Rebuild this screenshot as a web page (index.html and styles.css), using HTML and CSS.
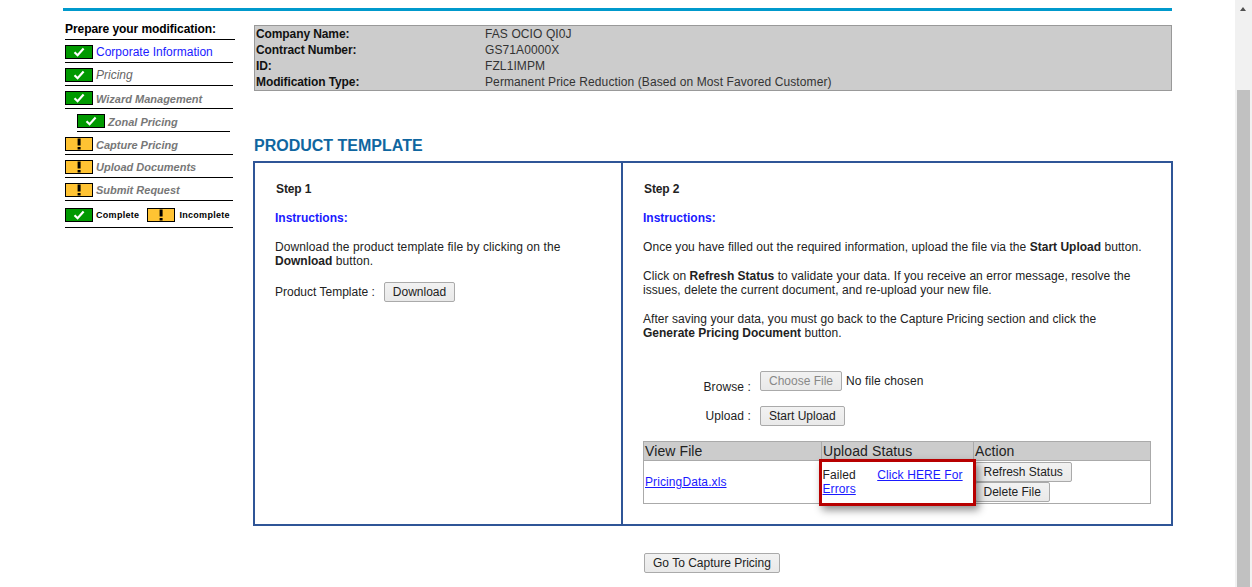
FILE: index.html
```html
<!DOCTYPE html>
<html lang="en">
<head>
<meta charset="utf-8">
<title>Product Template</title>
<link rel="stylesheet" href="styles.css">
</head>
<body>
<svg class="defs" width="0" height="0" aria-hidden="true">
  <symbol id="check" viewBox="0 0 28 14"><path d="M9.5 7.2 12.6 10.2 18.6 3.6" fill="none" stroke="#fff" stroke-width="2.2"/></symbol>
  <symbol id="warn" viewBox="0 0 28 14"><path d="M12.6 1.5h3v7h-3zM12.6 10h3v2.6h-3z" fill="#000"/></symbol>
</svg>
<div class="viewport">
  <div class="page">
    <div class="topbar"></div>
    <div class="columns">
      <nav class="sidebar">
        <div class="side-title">Prepare your modification:</div>
        <div class="side-row"><span class="badge ok"><svg><use href="#check"/></svg></span><a class="side-link">Corporate Information</a></div>
        <div class="side-row"><span class="badge ok"><svg><use href="#check"/></svg></span><span class="side-text large">Pricing</span></div>
        <div class="side-row"><span class="badge ok"><svg><use href="#check"/></svg></span><span class="side-text low">Wizard Management</span></div>
        <div class="side-row sub"><span class="badge ok"><svg><use href="#check"/></svg></span><span class="side-text low">Zonal Pricing</span></div>
        <div class="side-row"><span class="badge warn"><svg><use href="#warn"/></svg></span><span class="side-text low">Capture Pricing</span></div>
        <div class="side-row"><span class="badge warn"><svg><use href="#warn"/></svg></span><span class="side-text">Upload Documents</span></div>
        <div class="side-row"><span class="badge warn"><svg><use href="#warn"/></svg></span><span class="side-text">Submit Request</span></div>
        <div class="side-row legend">
          <span class="badge ok"><svg><use href="#check"/></svg></span><span class="legend-text">Complete</span>
          <span class="badge warn"><svg><use href="#warn"/></svg></span><span class="legend-text">Incomplete</span>
        </div>
      </nav>
      <main class="main">
        <dl class="info">
          <dt>Company Name:</dt><dd>FAS OCIO QI0J</dd>
          <dt>Contract Number:</dt><dd>GS71A0000X</dd>
          <dt>ID:</dt><dd>FZL1IMPM</dd>
          <dt>Modification Type:</dt><dd>Permanent Price Reduction (Based on Most Favored Customer)</dd>
        </dl>
        <h1 class="heading">PRODUCT TEMPLATE</h1>
        <div class="panel">
          <section class="step step-one">
            <p class="step-title">Step 1</p>
            <p class="instr">Instructions:</p>
            <p class="intro">Download the product template file by clicking on the <b>Download</b> button.</p>
            <div class="template-row"><span class="template-label">Product Template :</span><button class="btn">Download</button></div>
          </section>
          <section class="step step-two">
            <p class="step-title">Step 2</p>
            <p class="instr">Instructions:</p>
            <p>Once you have filled out the required information, upload the file via the <b>Start Upload</b> button.</p>
            <p>Click on <b>Refresh Status</b> to validate your data. If you receive an error message, resolve the issues, delete the current document, and re-upload your new file.</p>
            <p class="last">After saving your data, you must go back to the Capture Pricing section and click the <b>Generate Pricing Document</b> button.</p>
            <div class="upload-form">
              <span class="form-label browse">Browse :</span>
              <div class="file-line"><button class="btn disabled">Choose File</button><span>No file chosen</span></div>
              <span class="form-label">Upload :</span>
              <div><button class="btn">Start Upload</button></div>
            </div>
            <table class="files">
              <thead><tr><th class="c1">View File</th><th class="c2">Upload Status</th><th class="c3">Action</th></tr></thead>
              <tbody><tr>
                <td><a class="link">PricingData.xls</a></td>
                <td class="status">Failed <a class="link gap">Click HERE For Errors</a><span class="highlight"></span></td>
                <td class="actions"><button class="btn">Refresh Status</button><br><button class="btn">Delete File</button></td>
              </tr></tbody>
            </table>
          </section>
        </div>
        <div class="footer-action"><button class="btn">Go To Capture Pricing</button></div>
      </main>
    </div>
  </div>
  <div class="scrollbar"><span class="arrow"></span><span class="thumb"></span></div>
</div>
</body>
</html>
```
FILE: styles.css
```css
* { box-sizing: border-box; }
html, body { margin: 0; height: 100%; overflow: hidden; background: #fff; }
body { font: 12px/14px "Liberation Sans", Arial, sans-serif; color: #222; letter-spacing: .1px; }
b { letter-spacing: 0; }
.defs { position: absolute; }
.viewport { display: flex; height: 587px; width: 1252px; }
.page { flex: 1; padding: 8px 0 0 63px; min-width: 0; }
.topbar { width: 1109px; height: 3px; background: #0099cc; }
.columns { display: flex; width: 1110px; margin-top: 10px; }

.sidebar { width: 170px; margin-left: 2px; flex: none; }
.side-title { height: 19px; border-bottom: 1px solid #000; font-size: 12px; font-weight: bold; color: #000; line-height: 17px; white-space: nowrap; letter-spacing: -.07px; }
.side-row { height: 23px; border-bottom: 1px solid #000; display: flex; align-items: center; padding-top: 2px; width: 168px; }
.side-row.sub { margin-left: 12px; width: 153px; }
.side-row.legend { height: 27px; }
.badge { width: 28px; height: 14px; border: 1px solid #000; flex: none; display: block; position: relative; }
.badge svg { position: absolute; left: -1px; top: -1px; width: 28px; height: 14px; display: block; }
.badge.ok { background: #009900; }
.badge.warn { background: #ffc333; }
.side-link { margin-left: 3px; color: #1a1aff; font-size: 12px; letter-spacing: 0; }
.side-text { margin-left: 3px; color: #777; font-size: 11px; font-weight: bold; font-style: italic; white-space: nowrap; letter-spacing: 0; }
.side-text.low { padding-top: 2px; }
.side-text.large { font-size: 12px; font-weight: normal; color: #666; }
.legend-text { margin: 0 8px 0 3px; font-size: 9px; font-weight: bold; color: #000; letter-spacing: .3px; }
.legend-text:last-child { margin: 0 0 0 4px; }

.main { width: 918px; margin-left: 19px; padding-top: 4px; flex: none; }
.info { margin: 0; height: 66px; background: #ccc; border: 1px solid #999; display: grid; grid-template-columns: 230px 1fr; grid-auto-rows: 16px; line-height: 16px; }
.info dt { font-weight: bold; color: #111; padding-left: 1px; letter-spacing: -.1px; }
.info dd { margin: 0; color: #333; }
.heading { margin: 45px 0 6px; height: 19px; font-size: 16px; line-height: 19px; font-weight: bold; color: #0f66a0; letter-spacing: 0; }

.panel { display: flex; margin-left: -1px; width: 920px; height: 365px; border: 2px solid #2f5597; }
.step { padding-top: 19px; }
.step p { margin: 0 0 15px; }
.step .step-title { font-weight: bold; margin-bottom: 15px; padding-left: 1px; letter-spacing: -.1px; }
.step .instr { font-weight: bold; color: #1a1aff; letter-spacing: 0; }
.step .intro { margin-bottom: 14px; }
.step .last { margin-bottom: 31px; }
.step-one { width: 366px; padding-left: 20px; padding-right: 40px; flex: none; }
.step-two { flex: 1; border-left: 2px solid #2f5597; padding-left: 20px; padding-right: 20px; }
.step-two p { letter-spacing: .06px; }
.template-row { display: flex; align-items: center; gap: 9px; }
.template-label { letter-spacing: 0; }

.btn { font: 12px/14px "Liberation Sans", Arial, sans-serif; color: #222; height: 20px; padding: 0 8px; letter-spacing: 0; background: linear-gradient(#f2f2f2, #e9e9e9); border: 1px solid #aaa; border-radius: 2px; white-space: nowrap; }
.btn.disabled { color: #888; }

.upload-form { display: grid; grid-template-columns: 108px 1fr; column-gap: 9px; row-gap: 15px; align-items: center; margin-bottom: 15px; }
.form-label { text-align: right; }
.form-label.browse { position: relative; top: 6px; }
.file-line { display: flex; align-items: center; gap: 4px; }

.files { width: 507px; height: 63px; border-collapse: collapse; table-layout: fixed; border: 1px solid #aaa; }
.files th { background: #ccc; height: 19px; padding: 0 1px; border: 1px solid #aaa; font-size: 14px; font-weight: normal; text-align: left; color: #222; line-height: 16px; letter-spacing: .1px; }
.files .c1 { width: 178px; } .files .c2 { width: 152px; } .files .c3 { width: 177px; }
.files td { padding: 0 1px; vertical-align: middle; }
.link { color: #1a1aff; text-decoration: underline; }
.link.gap { margin-left: 18px; }
.status { position: relative; }
.highlight { position: absolute; left: -3px; top: -2px; width: 157px; height: 47px; border: 3px solid #b80000; box-shadow: 3px 4px 8px rgba(0,0,0,.45); pointer-events: none; }
.files .actions { padding: 0 0 0 1px; line-height: 0; }

.footer-action { margin: 27px 0 0 390px; }

.scrollbar { width: 17px; flex: none; background: #f1f1f1; position: relative; padding: 90px 2px 0; }
.arrow { position: absolute; left: 5px; top: 7px; width: 0; height: 0; border-left: 3.5px solid transparent; border-right: 3.5px solid transparent; border-bottom: 4px solid #505050; }
.thumb { display: block; height: 100%; background: #c1c1c1; }
```
